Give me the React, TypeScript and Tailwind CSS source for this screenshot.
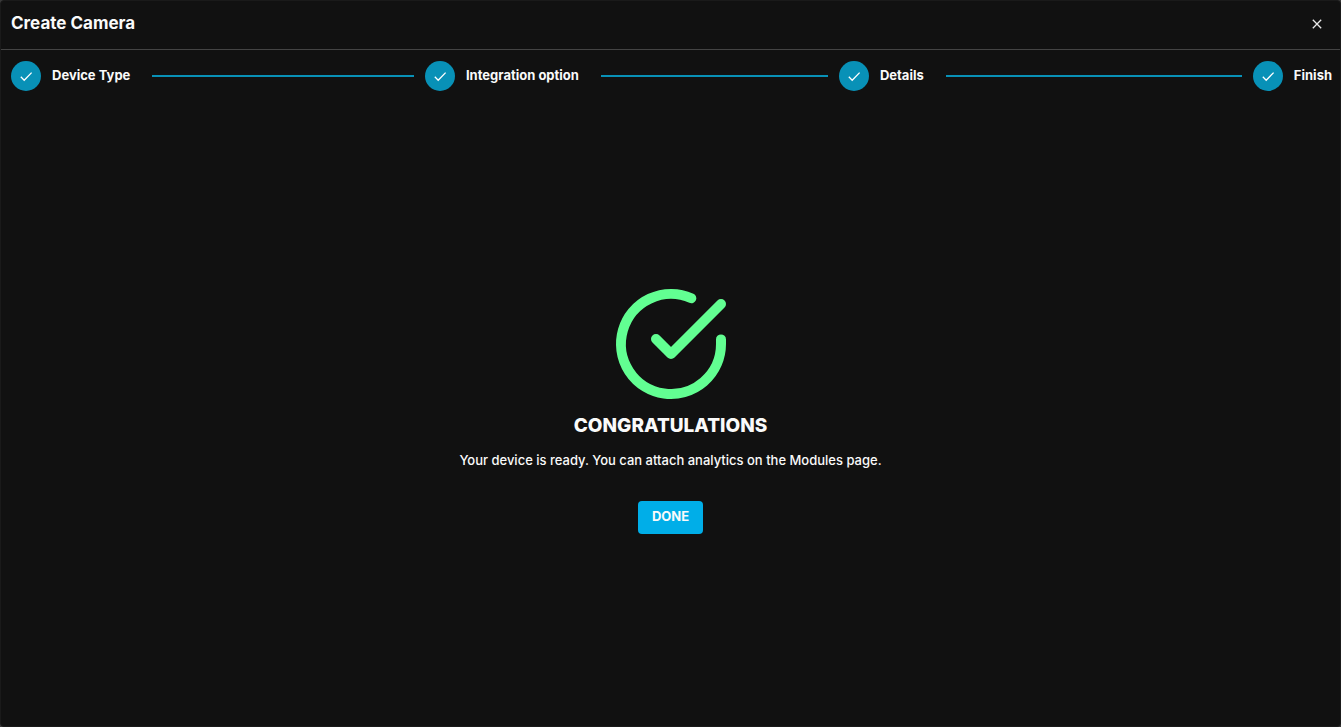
import React from "react";

const steps = ["Device Type", "Integration option", "Details", "Finish"];

const StepCheck: React.FC = () => (
  <span className="flex size-[30px] shrink-0 items-center justify-center rounded-full bg-[#0891b7]">
    <svg width="14" height="14" viewBox="0 0 14 14" fill="none" aria-hidden="true">
      <path d="M1.8 7.8L5.2 11.2L12.6 3.6" stroke="#fff" strokeWidth="1.3" />
    </svg>
  </span>
);

const App: React.FC = () => {
  return (
    <div className="min-h-screen flex bg-[#3a3a3a]">
      <section
        aria-labelledby="dialog-title"
        className="flex-1 flex flex-col rounded border border-[#1a1a1a] bg-[#111111] text-[#fafafa] font-['Inter','Liberation_Sans',sans-serif]"
      >
        {/* Header */}
        <header className="flex h-[49px] items-center justify-between border-b border-[#444444] px-[10px] pb-1">
          <h1 id="dialog-title" className="text-[17px] leading-6 font-bold">
            Create Camera
          </h1>
          <button type="button" aria-label="Close" className="mt-[2px] p-2">
            <svg width="10" height="10" viewBox="0 0 10 10" fill="none" aria-hidden="true">
              <path d="M0.8 0.8L9.2 9.2M9.2 0.8L0.8 9.2" stroke="#e8e8e8" strokeWidth="1.3" />
            </svg>
          </button>
        </header>

        {/* Stepper */}
        <ol className="flex pl-[10px] pr-2 py-[11px]">
          {steps.map((label, idx) => {
            const last = idx === steps.length - 1;
            return (
              <li
                key={label}
                className={last ? "flex items-center" : "flex flex-1 items-center"}
              >
                <StepCheck />
                <span className="ml-[11px] text-[13px] font-bold whitespace-nowrap">{label}</span>
                {!last && <span className="ml-[22px] mr-[11px] h-[2px] flex-1 bg-[#0891b7]" />}
              </li>
            );
          })}
        </ol>

        {/* Result */}
        <main className="flex flex-1 flex-col items-center justify-center pb-[11px]">
          <svg
            width="120"
            height="120"
            viewBox="0 0 24 24"
            fill="none"
            stroke="#62ff92"
            strokeWidth="2"
            strokeLinecap="round"
            strokeLinejoin="round"
            aria-hidden="true"
          >
            <path d="M22 11.08V12a10 10 0 1 1-5.93-9.14" />
            <path d="M22 4L12 14.01L9 11.01" />
          </svg>
          <h2 className="mt-2 text-[19px] leading-7 font-extrabold">CONGRATULATIONS</h2>
          <p className="mt-[10px] text-[13px] leading-5 font-medium">
            Your device is ready. You can attach analytics on the Modules page.
          </p>
          <button
            type="button"
            className="mt-[31px] h-[33px] rounded bg-[#00aee8] px-[14px] pb-px text-[13px] font-bold"
          >
            DONE
          </button>
        </main>
      </section>
    </div>
  );
};

export default App;
